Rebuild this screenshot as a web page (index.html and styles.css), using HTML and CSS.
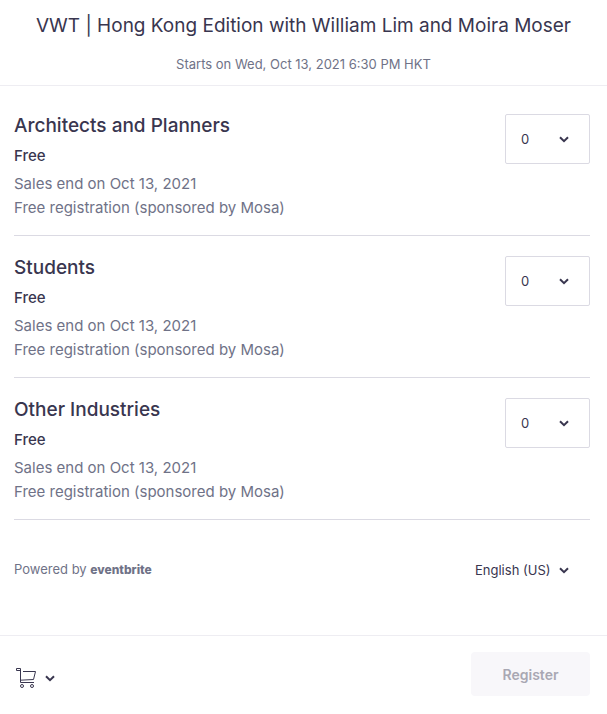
FILE: index.html
```html
<!DOCTYPE html>
<html lang="en">
<head>
  <meta charset="UTF-8" />
  <meta name="viewport" content="width=device-width, initial-scale=1" />
  <title>Checkout</title>
  <link rel="stylesheet" href="styles.css">
</head>
<body>
  <header class="header">
    <h1>VWT | Hong Kong Edition with William Lim and Moira Moser</h1>
    <p>Starts on Wed, Oct 13, 2021 6:30 PM HKT</p>
  </header>

  <main class="content">
    <section class="ticket">
      <div class="ticket-info">
        <h2 id="ticket1">Architects and Planners</h2>
        <p class="price">Free</p>
        <p class="detail">Sales end on Oct 13, 2021</p>
        <p class="detail">Free registration (sponsored by Mosa)</p>
      </div>
      <div class="select-wrap quantity">
        <select aria-labelledby="ticket1">
          <option>0</option>
          <option>1</option>
          <option>2</option>
        </select>
        <svg class="chevron" viewBox="0 0 10 7" aria-hidden="true"><path d="M1 1.2l4 4 4-4" /></svg>
      </div>
    </section>

    <section class="ticket">
      <div class="ticket-info">
        <h2 id="ticket2">Students</h2>
        <p class="price">Free</p>
        <p class="detail">Sales end on Oct 13, 2021</p>
        <p class="detail">Free registration (sponsored by Mosa)</p>
      </div>
      <div class="select-wrap quantity">
        <select aria-labelledby="ticket2">
          <option>0</option>
          <option>1</option>
          <option>2</option>
        </select>
        <svg class="chevron" viewBox="0 0 10 7" aria-hidden="true"><path d="M1 1.2l4 4 4-4" /></svg>
      </div>
    </section>

    <section class="ticket">
      <div class="ticket-info">
        <h2 id="ticket3">Other Industries</h2>
        <p class="price">Free</p>
        <p class="detail">Sales end on Oct 13, 2021</p>
        <p class="detail">Free registration (sponsored by Mosa)</p>
      </div>
      <div class="select-wrap quantity">
        <select aria-labelledby="ticket3">
          <option>0</option>
          <option>1</option>
          <option>2</option>
        </select>
        <svg class="chevron" viewBox="0 0 10 7" aria-hidden="true"><path d="M1 1.2l4 4 4-4" /></svg>
      </div>
    </section>

    <div class="powered">
      <p>Powered by <a href="#">eventbrite</a></p>
      <div class="select-wrap language">
        <select aria-label="Language">
          <option>English (US)</option>
        </select>
        <svg class="chevron" viewBox="0 0 10 7" aria-hidden="true"><path d="M1 1.2l4 4 4-4" /></svg>
      </div>
    </div>
  </main>

  <footer class="footer">
    <button type="button" class="cart" aria-label="Show order summary">
      <svg class="cart-icon" viewBox="0 0 20 21" aria-hidden="true">
        <path d="M4.5 2.5h-4v-2h4v14h13.5M7 3.5h12.5l-2 8-13 .7" />
        <circle cx="6" cy="18" r="1.5" />
        <circle cx="16" cy="18" r="1.5" />
      </svg>
      <svg class="chevron" viewBox="0 0 10 7" aria-hidden="true"><path d="M1 1.2l4 4 4-4" /></svg>
    </button>
    <button type="button" class="register" disabled>Register</button>
  </footer>
</body>
</html>
```

FILE: styles.css
```css
* {
  box-sizing: border-box;
}

body {
  margin: 0;
  min-height: 100vh;
  display: flex;
  flex-direction: column;
  font-family: Inter, "Liberation Sans", sans-serif;
  color: #39364f;
  background: #fff;
}

h1, h2, p {
  margin: 0;
}

.header {
  padding: 13px 16px 11px;
  border-bottom: 1px solid #eeedf2;
  text-align: center;
}

.header h1 {
  font-size: 19px;
  line-height: 26px;
  font-weight: 400;
}

.header p {
  margin-top: 15px;
  font-size: 13px;
  line-height: 20px;
  color: #6f7287;
}

.content {
  flex: 1;
  padding: 8px 17px 0 14px;
}

.ticket {
  display: flex;
  justify-content: space-between;
  align-items: flex-start;
  padding: 20px 0 15px;
  border-bottom: 1px solid #dbdae3;
}

.ticket h2 {
  font-size: 19px;
  line-height: 24px;
  font-weight: 500;
}

.price {
  margin: 7px 0 5px;
  font-size: 15px;
  line-height: 22px;
  font-weight: 500;
}

.detail {
  font-size: 15px;
  line-height: 24px;
  color: #6f7287;
}

.select-wrap {
  position: relative;
}

select {
  appearance: none;
  width: 100%;
  border: 0;
  background: transparent;
  color: inherit;
  font: inherit;
  font-size: 13px;
  cursor: pointer;
}

.quantity {
  width: 85px;
}

.quantity select {
  display: block;
  height: 50px;
  padding: 0 15px;
  border: 1px solid #dbdae3;
  border-radius: 2px;
}

.chevron {
  width: 10px;
  height: 7px;
  fill: none;
  stroke: #39364f;
  stroke-width: 2;
}

/* sits over the native select */
.select-wrap .chevron {
  position: absolute;
  top: 50%;
  right: 21px;
  margin-top: -3px;
  pointer-events: none;
}

.powered {
  display: flex;
  justify-content: space-between;
  align-items: center;
  padding: 37px 0;
  font-size: 13px;
  line-height: 24px;
  color: #6f7287;
}

.powered a {
  color: #6f7287;
  font-size: 12px;
  font-weight: 800;
  text-decoration: none;
}

.language select {
  height: 24px;
  padding: 0 39px 0 0;
  color: #39364f;
}

.footer {
  display: flex;
  justify-content: space-between;
  align-items: center;
  padding: 16px 17px 18px 16px;
  border-top: 1px solid #eeedf2;
}

button {
  border: 0;
  font: inherit;
}

.cart {
  display: flex;
  align-items: center;
  gap: 9px;
  padding: 8px 0 0;
  background: none;
  cursor: pointer;
}

.cart-icon {
  width: 20px;
  height: 21px;
  fill: none;
  stroke: #39364f;
}

.register {
  width: 119px;
  height: 44px;
  border-radius: 4px;
  background: #f8f7fa;
  color: #a9a8b3;
  font-size: 14px;
  font-weight: 600;
}
```
